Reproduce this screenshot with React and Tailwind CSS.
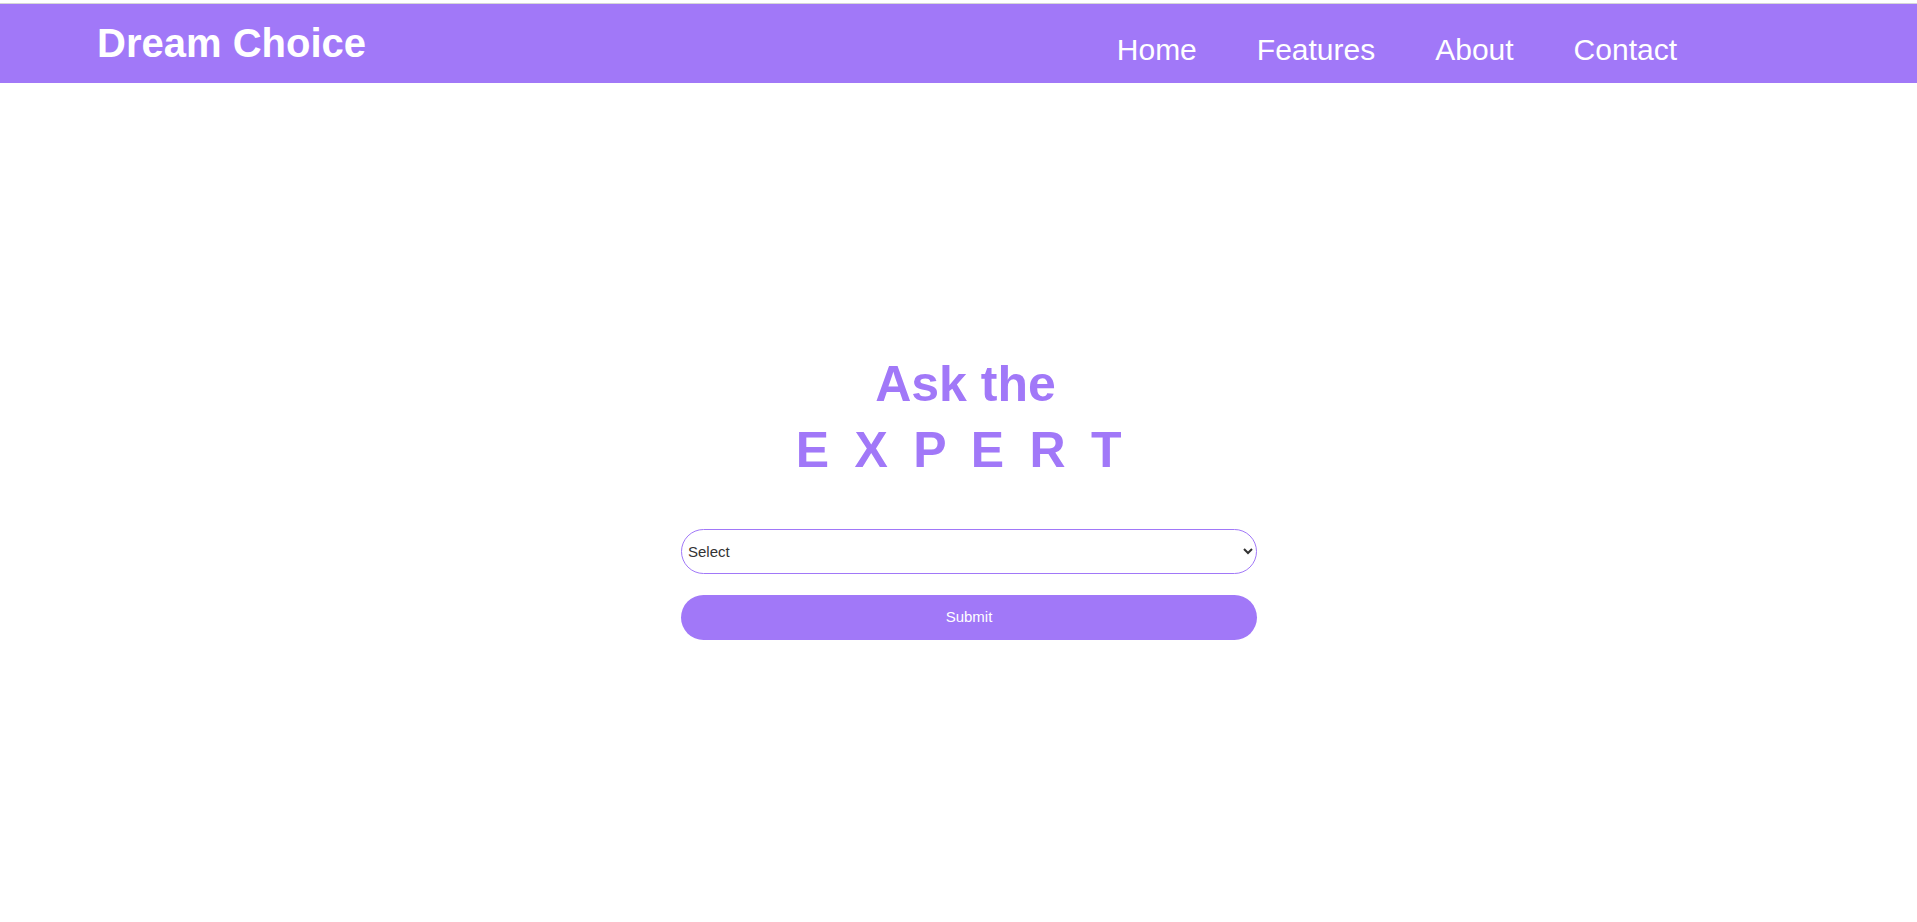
import { useState } from "react";

const links = ["Home", "Features", "About", "Contact"];

export default function App() {
  const [topic, setTopic] = useState("");

  return (
    <div className="min-h-screen bg-white font-['Liberation_Sans',Arial,sans-serif]">
      <div className="h-[4px] border-b border-[#d6d6d6] bg-white"></div>

      <nav className="h-[79px] bg-[#a178f8] flex justify-between text-white">
        <h1 className="pl-[97px] pt-[19px] text-[40px] font-bold leading-none">
          Dream Choice
        </h1>
        <ul className="flex gap-[60px] pr-[240px] pt-[31px] text-[30px] leading-none">
          {links.map((link) => (
            <li key={link}>
              <a href="#">{link}</a>
            </li>
          ))}
        </ul>
      </nav>

      <main className="flex flex-col items-center pt-[268px]">
        <div className="pl-[14px] text-center text-[50px] font-bold leading-[66px] text-[#a178f8]">
          <h2>Ask the</h2>
          <h2 className="pr-[8px] tracking-[5.7px]">E X P E R T</h2>
        </div>

        <form
          className="mt-[46px] pl-[21px] flex flex-col gap-[21px]"
          onSubmit={(e) => e.preventDefault()}
        >
          <select
            value={topic}
            onChange={(e) => setTopic(e.target.value)}
            className="w-[576px] h-[45px] pl-[2px] pr-[4px] rounded-full border border-[#a178f8] bg-white text-[15px] text-[#333]"
          >
            <option value="">Select</option>
            <option value="career">Career</option>
            <option value="education">Education</option>
            <option value="finance">Finance</option>
          </select>
          <button
            type="submit"
            className="w-[576px] h-[45px] rounded-full bg-[#a178f8] text-[15px] text-white"
          >
            Submit
          </button>
        </form>
      </main>
    </div>
  );
}
